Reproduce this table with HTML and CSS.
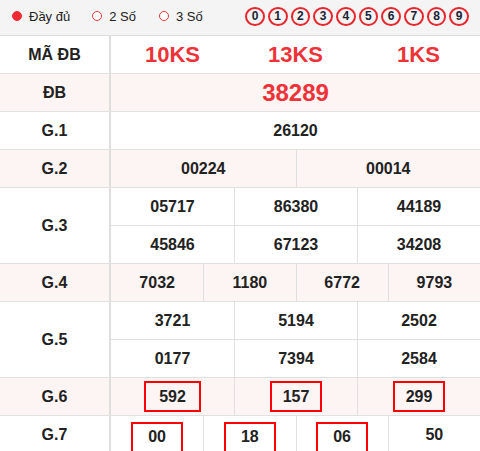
FILE: index.html
```html
<!DOCTYPE html>
<html lang="vi">
<head>
<meta charset="utf-8">
<link rel="stylesheet" href="styles.css">
</head>
<body>
<div class="bar">
  <div class="opts">
    <label class="opt"><span class="radio on"></span>Đầy đủ</label>
    <label class="opt"><span class="radio"></span>2 Số</label>
    <label class="opt"><span class="radio"></span>3 Số</label>
  </div>
  <div class="digits">
    <span class="dg">0</span><span class="dg">1</span><span class="dg">2</span><span class="dg">3</span><span class="dg">4</span><span class="dg">5</span><span class="dg">6</span><span class="dg">7</span><span class="dg">8</span><span class="dg">9</span>
  </div>
</div>
<div class="table">
  <div class="row">
    <div class="label">MÃ ĐB</div>
    <div class="vals c3">
      <div class="cell code">10KS</div>
      <div class="cell code">13KS</div>
      <div class="cell code">1KS</div>
    </div>
  </div>
  <div class="row alt">
    <div class="label">ĐB</div>
    <div class="vals c1">
      <div class="cell special">38289</div>
    </div>
  </div>
  <div class="row">
    <div class="label">G.1</div>
    <div class="vals c1">
      <div class="cell">26120</div>
    </div>
  </div>
  <div class="row alt">
    <div class="label">G.2</div>
    <div class="vals c2 sep">
      <div class="cell">00224</div>
      <div class="cell">00014</div>
    </div>
  </div>
  <div class="row">
    <div class="label">G.3</div>
    <div class="vals c3 sep two">
      <div class="cell">05717</div>
      <div class="cell">86380</div>
      <div class="cell">44189</div>
      <div class="cell">45846</div>
      <div class="cell">67123</div>
      <div class="cell">34208</div>
    </div>
  </div>
  <div class="row alt">
    <div class="label">G.4</div>
    <div class="vals c4 sep">
      <div class="cell">7032</div>
      <div class="cell">1180</div>
      <div class="cell">6772</div>
      <div class="cell">9793</div>
    </div>
  </div>
  <div class="row">
    <div class="label">G.5</div>
    <div class="vals c3 sep two">
      <div class="cell">3721</div>
      <div class="cell">5194</div>
      <div class="cell">2502</div>
      <div class="cell">0177</div>
      <div class="cell">7394</div>
      <div class="cell">2584</div>
    </div>
  </div>
  <div class="row alt">
    <div class="label">G.6</div>
    <div class="vals c3 sep">
      <div class="cell"><span class="hl wide">592</span></div>
      <div class="cell"><span class="hl">157</span></div>
      <div class="cell"><span class="hl">299</span></div>
    </div>
  </div>
  <div class="row">
    <div class="label">G.7</div>
    <div class="vals c4 sep">
      <div class="cell"><span class="hl low">00</span></div>
      <div class="cell"><span class="hl low">18</span></div>
      <div class="cell"><span class="hl low">06</span></div>
      <div class="cell">50</div>
    </div>
  </div>
</div>
</body>
</html>
```

FILE: styles.css
```css
* { box-sizing: border-box; }
html, body { margin: 0; padding: 0; background: #fff; }
body {
  font-family: "Liberation Sans", Arial, sans-serif;
  color: #222;
  width: 480px;
}
.bar {
  height: 36px;
  background: #f4f4f4;
  border-bottom: 1px solid #dcdcdc;
  display: flex;
  align-items: center;
  justify-content: space-between;
  padding: 0 10px 3px 12px;
}
.opts { display: flex; align-items: center; }
.opt {
  display: flex;
  align-items: center;
  font-size: 13px;
  color: #222;
  margin-right: 22px;
}
.opt:nth-child(2) { margin-right: 23px; }
.radio {
  width: 10px;
  height: 10px;
  border-radius: 50%;
  border: 1.5px solid #e8343c;
  margin-right: 7px;
  background: #fff;
}
.radio.on { background: #ee2b34; border-color: #ee2b34; }
.digits { display: flex; align-items: center; gap: 3px; margin-right: 1px; }
.dg {
  width: 19.7px;
  height: 19px;
  border: 2px solid #e8262e;
  border-radius: 50%;
  display: flex;
  align-items: center;
  justify-content: center;
  font-size: 12px;
  font-weight: bold;
  color: #1b2336;
}
.row {
  display: flex;
  border-bottom: 1px solid #e0e0e0;
}
.row.alt { background: #fdf4f4; }
.label {
  width: 111px;
  flex: none;
  border-right: 2px solid #dedede;
  display: flex;
  align-items: center;
  justify-content: center;
  font-size: 16px;
  font-weight: bold;
  color: #222;
}
.vals { flex: 1; display: grid; }
.c1 { grid-template-columns: 1fr; }
.c2 { grid-template-columns: 1fr 1fr; }
.c3 { grid-template-columns: 1fr 1fr 1fr; }
.c4 { grid-template-columns: 1fr 1fr 1fr 1fr; }
.cell {
  height: 37px;
  display: flex;
  align-items: center;
  justify-content: center;
  font-size: 16px;
  font-weight: bold;
  color: #222;
}
.sep .cell { border-left: 1px solid #e0e0e0; }
.sep.c2 .cell:nth-child(2n+1),
.sep.c3 .cell:nth-child(3n+1),
.sep.c4 .cell:nth-child(4n+1) { border-left: none; }
.two .cell:nth-child(-n+3) { height: 38px; border-bottom: 1px solid #e0e0e0; }
.code { font-size: 22px; color: #ee3338; }
.special { font-size: 24px; color: #ee3338; }
.hl {
  width: 52px;
  height: 31px;
  border: 2px solid #ff0000;
  display: flex;
  align-items: center;
  justify-content: center;
}
.hl.wide { width: 57px; }
.hl.low { margin-top: 5px; }
```
